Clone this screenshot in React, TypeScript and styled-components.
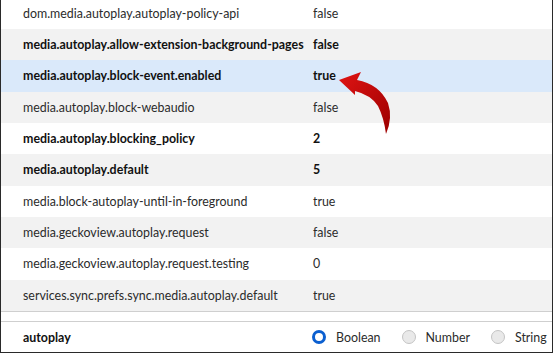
import React from "react";
import styled, { createGlobalStyle } from "styled-components";

const Global = createGlobalStyle`
  html, body { margin: 0; padding: 0; background: #ffffff; }
  body { font-family: "Lato", "Open Sans", sans-serif; }
`;

const Frame = styled.div`
  position: relative;
  width: 551px;
  height: 352px;
  border-left: 1px solid #2a2a2a;
  border-right: 1px solid #2a2a2a;
  border-bottom: 1px solid #2a2a2a;
  display: flex;
  flex-direction: column;
  overflow: hidden;
  color: #1c1c1c;
`;

const ListViewport = styled.div`
  height: 311px;
  overflow: hidden;
  border-bottom: 1px solid #cfcfcf;
  flex: none;
`;

const List = styled.div`
  margin-top: -2.33px;
  display: flex;
  flex-direction: column;
`;

const Row = styled.div<{ $bg: string }>`
  height: 31.33px;
  display: grid;
  grid-template-columns: 290px 1fr;
  align-items: center;
  padding-left: 22px;
  background: ${(p) => p.$bg};
  font-size: 12.4px;
  white-space: nowrap;
`;

const Cell = styled.span<{ $bold: boolean }>`
  font-weight: ${(p) => (p.$bold ? 700 : 400)};
  color: ${(p) => (p.$bold ? "#111111" : "#2b2b2b")};
`;

const Gap = styled.div`
  height: 9px;
  border-bottom: 1px solid #cfcfcf;
  flex: none;
`;

const Footer = styled.div`
  flex: 1;
  display: flex;
  align-items: center;
  padding-left: 22px;
  font-size: 12.4px;
`;

const Search = styled.span`
  flex: none;
  font-weight: 700;
  color: #111;
  width: 289px;
`;

const RadioLabel = styled.label`
  flex: none;
  display: flex;
  align-items: center;
  gap: 10px;
  color: #2b2b2b;
  margin-right: 21px;
`;

const RadioDot = styled.span<{ $on: boolean }>`
  box-sizing: border-box;
  width: 14px;
  height: 14px;
  border-radius: 50%;
  background: ${(p) => (p.$on ? "#ffffff" : "#e9e9e9")};
  border: ${(p) => (p.$on ? "3.5px solid #0b5fd0" : "1px solid #c4c4c4")};
`;

const ArrowLayer = styled.svg`
  position: absolute;
  left: 0;
  top: 0;
  pointer-events: none;
`;

type Pref = { name: string; value: string; bold: boolean };

const prefs: Pref[] = [
  { name: "dom.media.autoplay.autoplay-policy-api", value: "false", bold: false },
  { name: "media.autoplay.allow-extension-background-pages", value: "false", bold: true },
  { name: "media.autoplay.block-event.enabled", value: "true", bold: true },
  { name: "media.autoplay.block-webaudio", value: "false", bold: false },
  { name: "media.autoplay.blocking_policy", value: "2", bold: true },
  { name: "media.autoplay.default", value: "5", bold: true },
  { name: "media.block-autoplay-until-in-foreground", value: "true", bold: false },
  { name: "media.geckoview.autoplay.request", value: "false", bold: false },
  { name: "media.geckoview.autoplay.request.testing", value: "0", bold: false },
  { name: "services.sync.prefs.sync.media.autoplay.default", value: "true", bold: false },
];

const types = ["Boolean", "Number", "String"];

export default function App() {
  return (
    <>
      <Global />
      <Frame>
        <ListViewport>
          <List>
            {prefs.map((p, i) => (
              <Row key={p.name} $bg={i === 2 ? "#dae9fa" : i % 2 === 1 ? "#f2f2f2" : "#ffffff"}>
                <Cell $bold={p.bold}>{p.name}</Cell>
                <Cell $bold={p.bold}>{p.value}</Cell>
              </Row>
            ))}
          </List>
        </ListViewport>
        <Gap />
        <Footer>
          <Search>autoplay</Search>
          {types.map((t, i) => (
            <RadioLabel key={t}>
              <RadioDot $on={i === 0} />
              {t}
            </RadioLabel>
          ))}
        </Footer>
        <ArrowLayer width="552" height="352" viewBox="0 0 552 352">
          <defs>
            <linearGradient id="ar" x1="0" y1="0" x2="1" y2="1">
              <stop offset="0" stopColor="#e01414" />
              <stop offset="1" stopColor="#9c0000" />
            </linearGradient>
          </defs>
          <path
            d="M338 80 L360 72 L356 80 Q378 84 387 103 Q392 118 385 134 Q383 118 377 106 Q370 95 354 91 L354 95 Z"
            fill="url(#ar)"
          />
        </ArrowLayer>
      </Frame>
    </>
  );
}
